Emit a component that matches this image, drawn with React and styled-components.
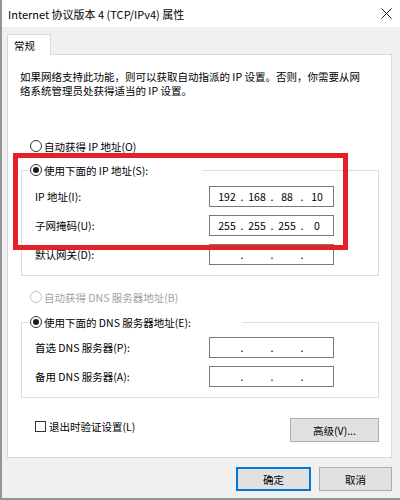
import React from 'react';
import styled, { createGlobalStyle } from 'styled-components';

const FONT = `"Noto Sans CJK SC", "Noto Sans", sans-serif`;

const Global = createGlobalStyle`
  html, body { margin: 0; padding: 0; background: #fff; }
  body { font-family: ${FONT}; }
`;

const Window = styled.div`
  position: relative;
  width: 400px;
  height: 500px;
  box-sizing: border-box;
  border-left: 2px solid #959595;
  border-bottom: 2px solid #959595;
  display: flex;
  flex-direction: column;
  font-family: ${FONT};
  font-size: 10.5px;
  color: #000;
  background: #f0f0f0;
  overflow: hidden;
`;

const TitleBar = styled.div`
  height: 27px;
  flex: none;
  background: #fff;
  display: flex;
  align-items: center;
  justify-content: space-between;
  padding: 0 8px 0 6px;
`;

const Title = styled.span`
  font-size: 11px;
  line-height: 1;
  margin-top: 1px;
`;

const Body = styled.div`
  flex: 1;
  display: flex;
  flex-direction: column;
  padding: 7px 8px 0 5px;
`;

const Tab = styled.div`
  width: 44px;
  height: 21px;
  box-sizing: border-box;
  border: 1px solid #d9d9d9;
  border-bottom: none;
  background: #fff;
  padding-left: 6px;
  display: flex;
  align-items: center;
  position: relative;
  z-index: 1;
  margin-bottom: -1px;
  font-size: 10.5px;
`;

const Panel = styled.div`
  height: 404px;
  box-sizing: border-box;
  border: 1px solid #d9d9d9;
  background: #fff;
  padding: 15px 12px 0 12px;
  display: flex;
  flex-direction: column;
`;

const Intro = styled.p`
  margin: 0;
  line-height: 14px;
`;

const RadioRow = styled.div`
  display: flex;
  align-items: center;
  height: 14px;
  gap: 2px;
  margin-top: ${p => p.$mt || 0}px;
  margin-left: ${p => p.$ml || 0}px;
  color: ${p => (p.$disabled ? '#a2a2a2' : '#000')};
`;

const RadioCircle = styled.span`
  width: 12px;
  height: 12px;
  box-sizing: border-box;
  border-radius: 50%;
  border: 1px solid ${p => (p.$disabled ? '#c4c4c4' : '#333')};
  background: #fff;
  display: flex;
  align-items: center;
  justify-content: center;
  flex: none;
  &::after {
    content: '';
    display: ${p => (p.$checked ? 'block' : 'none')};
    width: 6px;
    height: 6px;
    border-radius: 50%;
    background: #1a1a1a;
  }
`;

const Group = styled.div`
  margin-top: ${p => p.$mt}px;
  margin-left: 1px;
  border: 1px solid #dcdcdc;
  padding-bottom: 10px;
  display: flex;
  flex-direction: column;
  gap: 8px;
`;

const Legend = styled(RadioRow)`
  margin-top: -8px;
  margin-left: 8px;
  width: ${p => p.$w}px;
  background: #fff;
  margin-bottom: ${p => p.$mb}px;
`;

const FieldRow = styled.div`
  display: flex;
  align-items: center;
  justify-content: space-between;
  padding: 0 44px 0 13px;
`;

const IpBox = styled.div`
  width: 125px;
  height: 21px;
  box-sizing: border-box;
  border: 1px solid #7a7a7a;
  background: #fff;
  display: flex;
  align-items: center;
  padding-left: 2px;
  font-size: 10.5px;
`;

const Seg = styled.span`
  width: 30px;
  text-align: center;
  flex: none;
`;

const Dot = styled.span`
  width: 0;
  display: flex;
  justify-content: center;
  overflow: visible;
`;

const BottomRow = styled.div`
  display: flex;
  justify-content: space-between;
  align-items: flex-start;
  margin-top: 20px;
  margin-left: 15px;
`;

const CheckLabel = styled.label`
  display: flex;
  align-items: center;
  gap: 3px;
  margin-top: 3px;
  line-height: 11px;
`;

const CheckBox = styled.span`
  width: 11px;
  height: 11px;
  box-sizing: border-box;
  border: 1px solid #333;
  background: #fff;
  flex: none;
`;

const Button = styled.div`
  width: ${p => p.$w}px;
  height: ${p => p.$h}px;
  box-sizing: border-box;
  border: 1px solid ${p => (p.$default ? '#0078d7' : '#adadad')};
  box-shadow: ${p => (p.$default ? 'inset 0 0 0 1px #0078d7' : 'none')};
  background: #e1e1e1;
  display: flex;
  align-items: center;
  justify-content: center;
  font-size: 10.5px;
`;

const Footer = styled.div`
  display: flex;
  justify-content: flex-end;
  gap: 8px;
  margin-top: 9px;
`;

const Highlight = styled.div`
  position: absolute;
  left: 11px;
  top: 153px;
  width: 335px;
  height: 97px;
  box-sizing: border-box;
  border: 5px solid #e5202b;
  pointer-events: none;
`;

function Radio({ checked, disabled, children, ...rest }) {
  return (
    <RadioRow $disabled={disabled} {...rest}>
      <RadioCircle $checked={checked} $disabled={disabled} />
      <span>{children}</span>
    </RadioRow>
  );
}

function IpField({ parts }) {
  const p = parts || ['', '', '', ''];
  return (
    <IpBox>
      <Seg>{p[0]}</Seg>
      <Dot>.</Dot>
      <Seg>{p[1]}</Seg>
      <Dot>.</Dot>
      <Seg>{p[2]}</Seg>
      <Dot>.</Dot>
      <Seg>{p[3]}</Seg>
    </IpBox>
  );
}

function CloseIcon() {
  return (
    <svg width="11" height="11" viewBox="0 0 11 11">
      <path d="M0.5 0.5 L10.5 10.5 M10.5 0.5 L0.5 10.5" stroke="#1a1a1a" strokeWidth="1" fill="none" />
    </svg>
  );
}

export default function App() {
  return (
    <>
      <Global />
      <Window>
        <TitleBar>
          <Title>Internet 协议版本 4 (TCP/IPv4) 属性</Title>
          <CloseIcon />
        </TitleBar>
        <Body>
          <div>
            <Tab>常规</Tab>
          </div>
          <Panel>
            <Intro>
              如果网络支持此功能，则可以获取自动指派的 IP 设置。否则，你需要从网
              <br />
              络系统管理员处获得适当的 IP 设置。
            </Intro>

            <Radio $mt={41} $ml={10}>自动获得 IP 地址(O)</Radio>

            <Group $mt={17}>
              <LegendRadio checked w={172} mb={1}>使用下面的 IP 地址(S):</LegendRadio>
              <FieldRow>
                <span>IP 地址(I):</span>
                <IpField parts={['192', '168', '88', '10']} />
              </FieldRow>
              <FieldRow>
                <span>子网掩码(U):</span>
                <IpField parts={['255', '255', '255', '0']} />
              </FieldRow>
              <FieldRow>
                <span>默认网关(D):</span>
                <IpField />
              </FieldRow>
            </Group>

            <Radio disabled $mt={14} $ml={10}>自动获得 DNS 服务器地址(B)</Radio>

            <Group $mt={18}>
              <LegendRadio checked w={212} mb={0}>使用下面的 DNS 服务器地址(E):</LegendRadio>
              <FieldRow>
                <span>首选 DNS 服务器(P):</span>
                <IpField />
              </FieldRow>
              <FieldRow>
                <span>备用 DNS 服务器(A):</span>
                <IpField />
              </FieldRow>
            </Group>

            <BottomRow>
              <CheckLabel>
                <CheckBox />
                <span>退出时验证设置(L)</span>
              </CheckLabel>
              <Button $w={89} $h={24}>高级(V)...</Button>
            </BottomRow>
          </Panel>
          <Footer>
            <Button $w={75} $h={24} $default>确定</Button>
            <Button $w={73} $h={24}>取消</Button>
          </Footer>
        </Body>
        <Highlight />
      </Window>
    </>
  );
}

function LegendRadio({ checked, w, mb, children }) {
  return (
    <Legend $w={w} $mb={mb}>
      <RadioCircle $checked={checked} />
      <span>{children}</span>
    </Legend>
  );
}
